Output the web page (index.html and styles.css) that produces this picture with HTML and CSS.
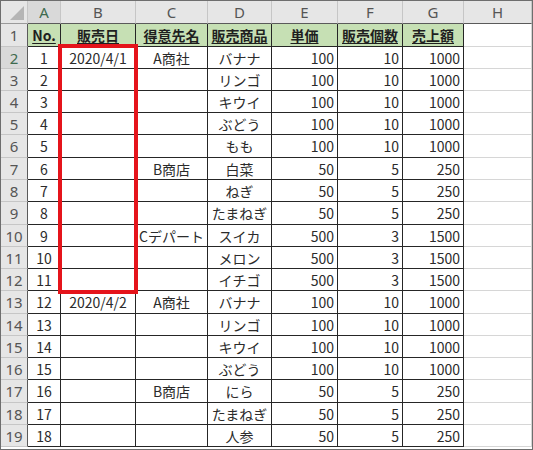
FILE: index.html
```html
<!DOCTYPE html>
<html lang="ja">
<head>
<meta charset="utf-8">
<link rel="stylesheet" href="styles.css">
</head>
<body>
<div class="sheet">
  <div class="grid">
    <div class="corner"><span class="tri"></span></div>
    <div class="ch active">A</div>
    <div class="ch">B</div>
    <div class="ch">C</div>
    <div class="ch">D</div>
    <div class="ch">E</div>
    <div class="ch">F</div>
    <div class="ch">G</div>
    <div class="ch">H</div>

    <div class="rh">1</div>
    <div class="c hd">No.</div><div class="c hd">販売日</div><div class="c hd">得意先名</div><div class="c hd">販売商品</div><div class="c hd">単価</div><div class="c hd">販売個数</div><div class="c hd">売上額</div><div class="c e"></div>

    <div class="rh active">2</div>
    <div class="c">1</div><div class="c">2020/4/1</div><div class="c">A商社</div><div class="c">バナナ</div><div class="c n">100</div><div class="c n">10</div><div class="c n">1000</div><div class="c e"></div>

    <div class="rh">3</div>
    <div class="c">2</div><div class="c"></div><div class="c"></div><div class="c">リンゴ</div><div class="c n">100</div><div class="c n">10</div><div class="c n">1000</div><div class="c e"></div>

    <div class="rh">4</div>
    <div class="c">3</div><div class="c"></div><div class="c"></div><div class="c">キウイ</div><div class="c n">100</div><div class="c n">10</div><div class="c n">1000</div><div class="c e"></div>

    <div class="rh">5</div>
    <div class="c">4</div><div class="c"></div><div class="c"></div><div class="c">ぶどう</div><div class="c n">100</div><div class="c n">10</div><div class="c n">1000</div><div class="c e"></div>

    <div class="rh">6</div>
    <div class="c">5</div><div class="c"></div><div class="c"></div><div class="c">もも</div><div class="c n">100</div><div class="c n">10</div><div class="c n">1000</div><div class="c e"></div>

    <div class="rh">7</div>
    <div class="c">6</div><div class="c"></div><div class="c">B商店</div><div class="c">白菜</div><div class="c n">50</div><div class="c n">5</div><div class="c n">250</div><div class="c e"></div>

    <div class="rh">8</div>
    <div class="c">7</div><div class="c"></div><div class="c"></div><div class="c">ねぎ</div><div class="c n">50</div><div class="c n">5</div><div class="c n">250</div><div class="c e"></div>

    <div class="rh">9</div>
    <div class="c">8</div><div class="c"></div><div class="c"></div><div class="c">たまねぎ</div><div class="c n">50</div><div class="c n">5</div><div class="c n">250</div><div class="c e"></div>

    <div class="rh">10</div>
    <div class="c">9</div><div class="c"></div><div class="c">Cデパート</div><div class="c">スイカ</div><div class="c n">500</div><div class="c n">3</div><div class="c n">1500</div><div class="c e"></div>

    <div class="rh">11</div>
    <div class="c">10</div><div class="c"></div><div class="c"></div><div class="c">メロン</div><div class="c n">500</div><div class="c n">3</div><div class="c n">1500</div><div class="c e"></div>

    <div class="rh">12</div>
    <div class="c">11</div><div class="c"></div><div class="c"></div><div class="c">イチゴ</div><div class="c n">500</div><div class="c n">3</div><div class="c n">1500</div><div class="c e"></div>

    <div class="rh">13</div>
    <div class="c">12</div><div class="c">2020/4/2</div><div class="c">A商社</div><div class="c">バナナ</div><div class="c n">100</div><div class="c n">10</div><div class="c n">1000</div><div class="c e"></div>

    <div class="rh">14</div>
    <div class="c">13</div><div class="c"></div><div class="c"></div><div class="c">リンゴ</div><div class="c n">100</div><div class="c n">10</div><div class="c n">1000</div><div class="c e"></div>

    <div class="rh">15</div>
    <div class="c">14</div><div class="c"></div><div class="c"></div><div class="c">キウイ</div><div class="c n">100</div><div class="c n">10</div><div class="c n">1000</div><div class="c e"></div>

    <div class="rh">16</div>
    <div class="c">15</div><div class="c"></div><div class="c"></div><div class="c">ぶどう</div><div class="c n">100</div><div class="c n">10</div><div class="c n">1000</div><div class="c e"></div>

    <div class="rh">17</div>
    <div class="c">16</div><div class="c"></div><div class="c">B商店</div><div class="c">にら</div><div class="c n">50</div><div class="c n">5</div><div class="c n">250</div><div class="c e"></div>

    <div class="rh">18</div>
    <div class="c">17</div><div class="c"></div><div class="c"></div><div class="c">たまねぎ</div><div class="c n">50</div><div class="c n">5</div><div class="c n">250</div><div class="c e"></div>

    <div class="rh">19</div>
    <div class="c">18</div><div class="c"></div><div class="c"></div><div class="c">人参</div><div class="c n">50</div><div class="c n">5</div><div class="c n">250</div><div class="c e"></div>

    <div class="sel"></div>
  </div>
</div>
</body>
</html>
```

FILE: styles.css
```css
html, body {
  margin: 0;
  padding: 0;
  background: #ffffff;
}

.sheet {
  box-sizing: border-box;
  width: 533px;
  height: 450px;
  border: 1px solid #6e6e6e;
  background: #ffffff;
  overflow: hidden;
}

.grid {
  position: relative;
  display: grid;
  grid-template-columns: 27px 33px 75px 72px 64px 66px 65px 61px 68px;
  grid-template-rows: 23px 23px 22px 22px 22px 22px 23px 22px 22px 23px 22px 22px 22px 23px 22px 22px 22px 23px 22px 22px;
  font-family: "Noto Sans CJK JP", "Noto Sans", sans-serif;
  font-size: 14px;
  color: #2b2b2b;
}

.grid > div {
  box-sizing: border-box;
  display: flex;
  align-items: center;
  justify-content: center;
  white-space: nowrap;
  overflow: hidden;
}

.corner {
  position: relative;
  background: #e6e6e6;
  border-right: 1px solid #c6c6c6;
  border-bottom: 1px solid #9a9a9a;
}

.tri {
  position: absolute;
  right: 3px;
  bottom: 3px;
  width: 0;
  height: 0;
  border-left: 14px solid transparent;
  border-bottom: 14px solid #b5b5b5;
}

.ch {
  background: #e6e6e6;
  border-right: 1px solid #c6c6c6;
  border-bottom: 1px solid #5a5a5a;
  font-family: "Noto Sans", sans-serif;
  font-size: 15px;
  color: #555555;
}

.rh {
  background: #e6e6e6;
  border-right: 1px solid #5a5a5a;
  border-bottom: 1px solid #c6c6c6;
  font-family: "Noto Sans", sans-serif;
  font-size: 15px;
  color: #555555;
}

.ch.active,
.rh.active {
  background: #d9d9d9;
  color: #3f6b4f;
}

.c {
  border-right: 1px solid #262626;
  border-bottom: 1px solid #262626;
}

.c.hd {
  background: #c6e0b4;
  font-weight: 700;
  text-decoration: underline;
  text-underline-offset: 2px;
  color: #1f1f1f;
}

.c.n {
  justify-content: flex-end;
  padding-right: 3px;
}

.c.e {
  border-right: 1px solid #d6d6d6;
  border-bottom: 1px solid #d6d6d6;
}

.sel {
  position: absolute;
  grid-column: 3 / 4;
  grid-row: 3 / 14;
  left: -3px;
  right: -2px;
  top: -3px;
  bottom: -3px;
  border: 4px solid #e5141b;
  box-sizing: border-box;
}
```
